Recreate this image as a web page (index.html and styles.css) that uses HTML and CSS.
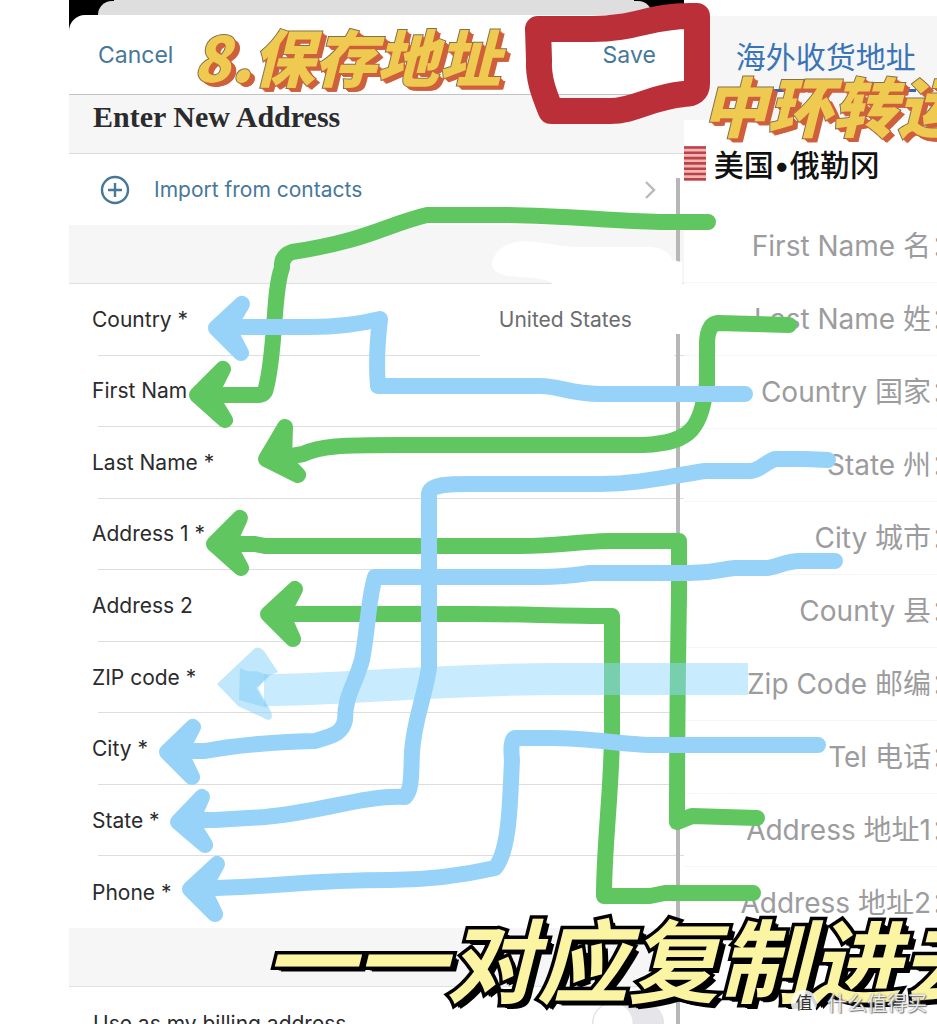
FILE: index.html
```html
<!DOCTYPE html>
<html lang="zh">
<head>
<meta charset="UTF-8">
<title>Enter New Address</title>
<link rel="stylesheet" href="styles.css">
</head>

<body>

<div class="board">

<form class="phone">

<div class="backdrop"><div class="card"></div></div>

<div class="nav">
<button type="button" class="link">Cancel</button>
<button type="button" class="link">Save</button>
</div>

<h1>Enter New Address</h1>

<button type="button" class="import">
<svg class="plus" viewBox="0 0 30 30"><circle cx="15" cy="15" r="13"/><path d="M15 8v14M8 15h14"/></svg>
<span>Import from contacts</span>
<svg class="chevron" viewBox="0 0 12 18"><path d="M2 1l8 8-8 8"/></svg>
</button>

<div class="gap"></div>

<div class="fields">
<div class="field"><label for="country">Country *</label><select id="country"><option>United States</option></select></div>
<div class="field"><label for="first">First Nam</label><input id="first" type="text"></div>
<div class="field"><label for="last">Last Name *</label><input id="last" type="text"></div>
<div class="field"><label for="addr1">Address 1 *</label><input id="addr1" type="text"></div>
<div class="field"><label for="addr2">Address 2</label><input id="addr2" type="text"></div>
<div class="field"><label for="zip">ZIP code *</label><input id="zip" type="text"></div>
<div class="field"><label for="city">City *</label><input id="city" type="text"></div>
<div class="field"><label for="state">State *</label><input id="state" type="text"></div>
<div class="field"><label for="phone">Phone *</label><input id="phone" type="tel"></div>
</div>

<div class="gap"></div>

<div class="billing">
<label for="billing">Use as my billing address</label>
<input id="billing" type="checkbox">
</div>

</form>

<div class="forwarder">

<div class="tab"><a href="#oregon">海外收货地址</a></div>

<h2 id="oregon">
<svg class="flag" viewBox="0 0 22 35"><path d="M0 1.5h22M0 6.8h22M0 12.1h22M0 17.4h22M0 22.7h22M0 28h22M0 33.3h22"/></svg>
美国•俄勒冈
</h2>

<ul class="list">
<li>First Name 名：</li>
<li>Last Name 姓：</li>
<li>Country 国家：</li>
<li>State 州：</li>
<li>City 城市：</li>
<li>County 县：</li>
<li>Zip Code 邮编：</li>
<li>Tel 电话：</li>
<li>Address 地址1：</li>
<li>Address 地址2：</li>
</ul>

</div>

<!-- marker drawing over both screens -->
<svg class="marker" viewBox="0 0 937 1024">

<path class="scroll" d="M678 178V262M678 334V1024"/>
<path class="erase" d="M492 262C496 250 505 242 525 241C550 243 560 247 580 247H650Q668 248 672 260L682 262V286H556Q545 277 520 277Q490 276 492 262Z"/>
<path class="erase" d="M480 346H674V360H480Z"/>

<g class="green">
<path d="M708 222H660C610 221 560 215 500 215H427C385 225 370 240 292 252Q281 256 282 268C273 290 276 350 266 388Q265 395 258 395H205"/>
<path class="head" d="M223 369L197 395L225 420L210 395Z"/>
<path d="M789 325L718 323Q708 324 707 342V384C700 425 695 443 643 445H400C340 445 320 446 303 454L275 459"/>
<path class="head" d="M285 427L266 459L298 475L284 460Z"/>
<path d="M757 818L692 816L677 822Q677 720 679 595V541H610C570 542 560 546 520 546H265L255 544H220"/>
<path class="head" d="M240 518L214 544L241 568L228 544Z"/>
<path d="M753 893L665 893L650 896H604C604 840 613 780 612 720V616C560 616 520 614 470 614H280"/>
<path class="head" d="M295 589L268 614L293 639L282 614Z"/>
</g>

<g class="zip">
<path class="band" d="M264 690C340 690 440 679 560 679H748"/>
<path d="M217 684L254 649Q259 645 264 651L278 672L268 676L258 688L268 706Q276 719 268 720L238 706Z"/>
<path d="M240 668Q248 673 256 671L270 676L256 688L268 708L239 700Z"/>
</g>

<g class="blue">
<path d="M745 394H600C570 394 560 386 540 386H378C376 365 377 345 380 319C360 324 340 327 310 327H230"/>
<path class="head" d="M242 304L216 328L241 353L228 328Z"/>
<path d="M828 460L805 459H775C765 462 760 471 750 471H705C670 476 640 484 600 484H470C450 484 430 484 429 494V668C424 700 414 720 412 752C411 775 412 790 405 797C365 795 320 812 265 817L215 820H190"/>
<path class="head" d="M202 797L178 822L205 845L191 822Z"/>
<path d="M835 561H800C785 561 775 568 765 568H735C720 569 715 573 690 573H590C570 576 555 577 540 577H375C368 600 368 630 362 660C355 685 345 695 345 720C342 735 330 736 315 741C280 742 240 744 205 751H180"/>
<path class="head" d="M193 727L167 752L192 777L180 752Z"/>
<path d="M818 745H650C620 744 590 738 550 738H515Q510 740 512 760C510 800 510 850 495 868C460 876 430 880 390 880C300 880 270 888 205 888"/>
<path class="head" d="M217 864L190 889L215 914L203 889Z"/>
</g>

<path class="red" d="M538 29H592C635 29 650 16 690 16H697V84Q697 94 684 94C650 97 635 111 610 111H551C545 96 538 80 539 60Z"/>

</svg>

<div class="sticker save-step">8.保存地址</div>
<div class="sticker company">中环转运</div>
<div class="sticker caption">一一对应复制进去</div>

<div class="watermark"><span>值</span>什么值得买</div>

</div>

</body>
</html>
```

FILE: styles.css
```css
body{
margin:0;
font-family:Inter,"Noto Sans CJK SC",sans-serif;
background:white;
color:#2b2b2d;
}

.board{
position:relative;
display:grid;
grid-template-columns:69px 17fr 7fr;
height:100vh;
min-height:1024px;
overflow:hidden;
}

.phone{
grid-column:2;
min-width:0;
}

button{
padding:0;
border:none;
background:none;
font-family:inherit;
color:#47789a;
cursor:pointer;
}

.backdrop{
height:32px;
margin-bottom:-17px;
padding:1px 32px 0 29px;
background:linear-gradient(#000,#000) left/45px 100% no-repeat,linear-gradient(#000,#000) right top/50px 12px no-repeat,#dedede;
box-sizing:border-box;
}

.card{
height:31px;
border-radius:14px 14px 0 0;
background:#dedede;
}

.nav{
position:relative;
display:flex;
justify-content:space-between;
align-items:center;
height:80px;
padding:0 28px 0 29px;
border-bottom:1px solid #c2c2c4;
border-radius:16px 0 0 0;
background:white;
box-sizing:border-box;
}

.link{
font-size:23px;
}

h1{
height:59px;
margin:0;
padding-left:24px;
border-bottom:1px solid #dcdcde;
background:#f6f6f6;
box-sizing:border-box;
font-family:"Liberation Serif",serif;
font-size:30px;
line-height:44px;
white-space:nowrap;
}

.import{
display:flex;
align-items:center;
width:100%;
height:71px;
padding:0 28px 0 31px;
font-size:21px;
}

.plus{
width:30px;
margin-right:24px;
}

.chevron{
width:12px;
margin-left:auto;
}

.plus,.chevron{
fill:none;
stroke:#47789a;
stroke-width:2.4;
}

.chevron{
stroke:#b9b9bb;
}

.gap{
height:59px;
border-bottom:1px solid #e0e0e2;
background:#f6f6f6;
box-sizing:border-box;
}

.fields{
display:grid;
grid-auto-rows:1fr;
height:644px;
margin-left:29px;
}

.field{
display:flex;
align-items:center;
border-bottom:1px solid #dededf;
}

.field:last-child{
border-bottom:none;
}

label{
font-size:21px;
}

.field label{
margin-left:-6px;
}

.field input,.field select{
flex:1;
min-width:0;
padding:0;
border:none;
background:none;
outline:none;
font-family:inherit;
font-size:21px;
color:#6c6c6e;
}

.field select{
appearance:none;
margin-right:52px;
text-align-last:right;
}

.billing{
display:flex;
align-items:center;
justify-content:space-between;
height:72px;
padding:0 20px 0 24px;
}

.billing input{
appearance:none;
width:72px;
height:42px;
margin:0;
border:1px solid #e3e3e5;
border-radius:21px;
background:radial-gradient(circle at 20px 20px,white 19px,#e6e6ea 20px);
}

.forwarder{
grid-column:3;
min-width:0;
}

.tab{
height:104px;
margin-top:16px;
padding:22px 0 0 52px;
background:#f6f6f6;
box-sizing:border-box;
}

.tab a{
display:block;
width:180px;
padding-bottom:13px;
border-bottom:3px solid #3a62b5;
font-size:30px;
line-height:38px;
white-space:nowrap;
color:#3a74b6;
text-decoration:none;
}

h2{
display:flex;
align-items:center;
gap:8px;
height:90px;
margin:0;
padding-bottom:4px;
box-sizing:border-box;
font-size:30px;
font-weight:500;
white-space:nowrap;
color:#111;
}

.flag{
width:22px;
height:35px;
background:#f6b5b5;
stroke:#b8444a;
stroke-width:2.6;
}

.list{
margin:0;
padding:0;
list-style:none;
}

.list li{
display:flex;
justify-content:flex-end;
height:73px;
margin-right:-22px;
border-bottom:1px solid #f6f6f6;
box-sizing:border-box;
font-size:28px;
line-height:72px;
white-space:nowrap;
color:#9c9c9e;
}

.marker{
position:absolute;
top:0;
left:0;
width:100%;
pointer-events:none;
}

.marker g,.red{
fill:none;
stroke-width:16;
stroke-linecap:round;
stroke-linejoin:round;
}

.green{
stroke:#5fc660;
}

.green .head{
fill:#5fc660;
}

.blue{
stroke:#97d3f9;
}

.blue .head{
fill:#97d3f9;
}

.marker .zip{
fill:rgba(130,208,248,0.5);
stroke:none;
}

.zip .band{
fill:none;
stroke:rgba(145,216,252,0.5);
stroke-width:32;
stroke-linecap:butt;
}

.marker .red{
stroke:#bb3038;
stroke-width:26;
}

.scroll{
stroke:#b7b7b8;
stroke-width:4;
}

.erase{
fill:white;
}

.sticker{
position:absolute;
font-family:"Noto Sans CJK SC",sans-serif;
font-style:italic;
font-weight:900;
line-height:1;
white-space:nowrap;
color:#efca50;
-webkit-text-stroke:2px #81704d;
paint-order:stroke fill;
text-shadow:1px 1px #cf603c,2px 2px #cf603c,3px 3px #cf603c,4px 4px #cf603c,5px 4px #cf603c;
}

.save-step{
left:193px;
top:24px;
font-size:62px;
}

.company{
left:702px;
top:72px;
font-size:65px;
}

.caption{
left:264px;
top:911px;
font-size:91px;
font-weight:700;
color:#fbf4a2;
-webkit-text-stroke:7px black;
text-shadow:2px 2px black,4px 4px black,6px 5px black;
}

.watermark{
position:absolute;
left:791px;
top:988px;
display:flex;
align-items:center;
gap:10px;
font-size:20px;
white-space:nowrap;
color:rgba(255,255,255,0.85);
text-shadow:0 0 2px #777,1px 1px 1px #777;
}

.watermark span{
width:26px;
border-radius:50%;
background:rgba(255,255,255,0.85);
font-size:17px;
line-height:26px;
text-align:center;
text-shadow:none;
color:#333;
}
```
